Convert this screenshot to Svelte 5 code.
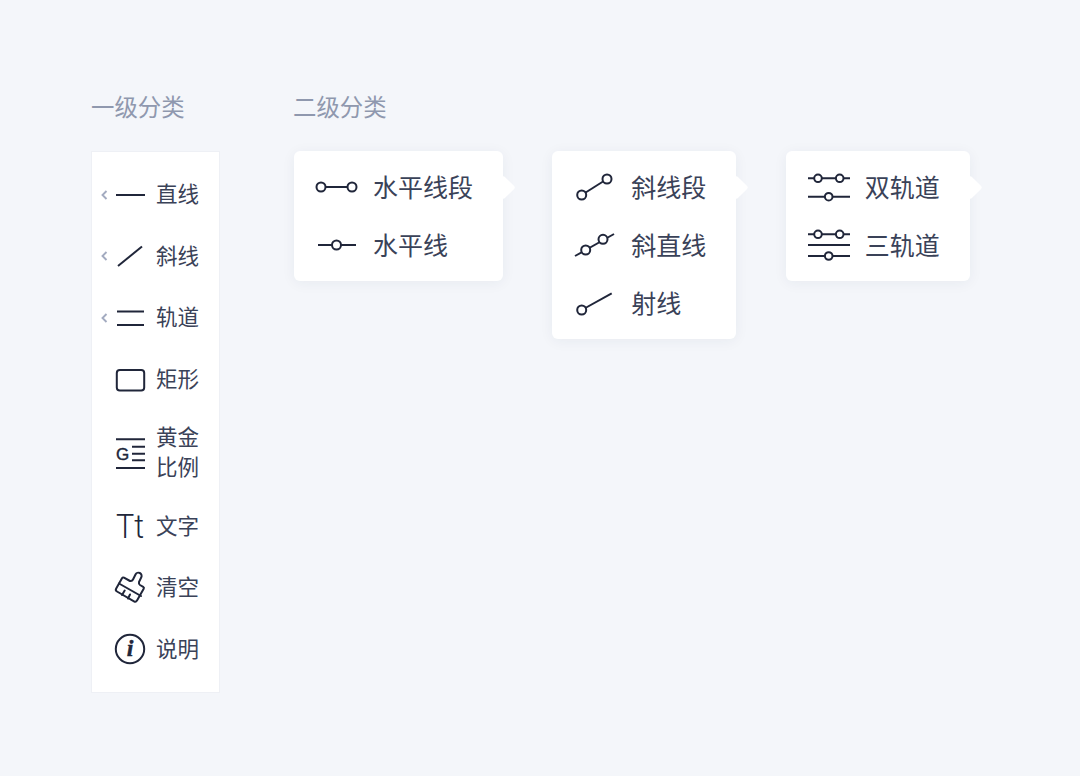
<script>
	const primary = [
		{ label: '直线', icon: 'line', more: true },
		{ label: '斜线', icon: 'slant', more: true },
		{ label: '轨道', icon: 'track', more: true },
		{ label: '矩形', icon: 'rect' },
		{ label: '黄金比例', icon: 'golden', tall: true },
		{ label: '文字', icon: 'text' },
		{ label: '清空', icon: 'brush' },
		{ label: '说明', icon: 'info' }
	];

	const groups = [
		[
			{ label: '水平线段', icon: 'h-segment' },
			{ label: '水平线', icon: 'h-line' }
		],
		[
			{ label: '斜线段', icon: 's-segment' },
			{ label: '斜直线', icon: 's-line' },
			{ label: '射线', icon: 'ray' }
		],
		[
			{ label: '双轨道', icon: 'double' },
			{ label: '三轨道', icon: 'triple' }
		]
	];
</script>

{#snippet mainIcon(name)}
	<svg class="main-icon" viewBox="0 0 30 34" fill="none" stroke="currentColor" stroke-width="2">
		{#if name === 'line'}
			<path d="M1 17h29" />
		{:else if name === 'slant'}
			<path d="M3 27 27 7.500" />
		{:else if name === 'track'}
			<path d="M2 10.500h27M2 24h27" />
		{:else if name === 'rect'}
			<rect x="1.800" y="7" width="27.400" height="20.500" rx="3" />
		{:else if name === 'golden'}
			<path d="M1 3.300h29M1 32h29M17 10.700h13M17 17.700h13M17 24.300h13" />
			<text class="g" x="1" y="23.500" stroke="currentColor" stroke-width="0.400" fill="currentColor">G</text>
		{:else if name === 'text'}
			<text class="tt" x="1" y="29" stroke="none" fill="currentColor" textLength="28" lengthAdjust="spacingAndGlyphs">Tt</text>
		{:else if name === 'brush'}
			<path d="M1.200 17.500 7 7.200a1.500 1.500 0 0 1 2-.5L15 10Q17 10.500 18 8.500L20.500 3.500a3.200 3.200 0 0 1 5.800 2.800L24 11Q23.500 13 25 14L28.200 15.800a1.500 1.500 0 0 1 .5 2L22 29.500a2.200 2.200 0 0 1-3 .8L2 20.500a2.200 2.200 0 0 1-.8-3Z" stroke-linejoin="round" />
			<path d="M4 12.500 26 25M7 24 9.700 19.500M13 27.500 15 23.500" stroke-linecap="round" />
		{:else if name === 'info'}
			<circle cx="15" cy="17" r="14.200" />
			<text class="i" x="15" y="24" text-anchor="middle" stroke="currentColor" stroke-width="0.400" fill="currentColor">i</text>
		{/if}
	</svg>
{/snippet}

{#snippet subIcon(name)}
	<svg class="sub-icon" viewBox="0 0 44 32" fill="none" stroke="currentColor" stroke-width="2">
		{#if name === 'h-segment'}
			<path d="M10 15h24" />
			<circle cx="6" cy="15" r="4.500" fill="#fff" />
			<circle cx="37" cy="15" r="4.500" fill="#fff" />
		{:else if name === 'h-line'}
			<path d="M3 15h38" />
			<circle cx="21.500" cy="15" r="4.500" fill="#fff" />
		{:else if name === 's-segment'}
			<path d="M8.700 23 34 7" />
			<circle cx="8.700" cy="23" r="4.500" fill="#fff" />
			<circle cx="34" cy="7" r="4.500" fill="#fff" />
		{:else if name === 's-line'}
			<path d="M2 26 41 4" />
			<circle cx="12.700" cy="20" r="4.500" fill="#fff" />
			<circle cx="30" cy="9.300" r="4.500" fill="#fff" />
		{:else if name === 'ray'}
			<path d="M8.700 22 38.700 5.300" />
			<circle cx="8.700" cy="22" r="4.500" fill="#fff" />
		{:else if name === 'double'}
			<path d="M1 6.300h42M1 24.700h42" />
			<circle cx="11" cy="6.300" r="3.800" fill="#fff" />
			<circle cx="32.700" cy="6.300" r="3.800" fill="#fff" />
			<circle cx="21.700" cy="24.700" r="3.800" fill="#fff" />
		{:else if name === 'triple'}
			<path d="M1 4.300h42M1 15h42M1 26h42" />
			<circle cx="11" cy="4.300" r="3.800" fill="#fff" />
			<circle cx="32.700" cy="4.300" r="3.800" fill="#fff" />
			<circle cx="21.700" cy="26" r="3.800" fill="#fff" />
		{/if}
	</svg>
{/snippet}

<main class="page">
	<section class="first">
		<h2>一级分类</h2>
		<ul class="sidebar">
			{#each primary as item}
				<li class="side-row" class:tall={item.tall}>
					<span class="chevron-slot">
						{#if item.more}
							<svg class="chevron" viewBox="0 0 7 10" fill="none">
								<path d="M5.500 1 1.500 5l4 4" stroke="currentColor" stroke-width="1.900" />
							</svg>
						{/if}
					</span>
					{@render mainIcon(item.icon)}
					<span class="side-label">{item.label}</span>
				</li>
			{/each}
		</ul>
	</section>

	<section class="second">
		<h2>二级分类</h2>
		<div class="flyouts">
			{#each groups as group}
				<ul class="flyout">
					{#each group as item}
						<li class="fly-row">
							{@render subIcon(item.icon)}
							<span class="fly-label">{item.label}</span>
						</li>
					{/each}
				</ul>
			{/each}
		</div>
	</section>
</main>

<style>
	:global(body) {
		background: #f4f6fa;
	}

	ul {
		list-style: none;
		margin: 0;
		padding: 0;
	}

	.page {
		display: flex;
		align-items: flex-start;
		gap: 74px;
		box-sizing: border-box;
		min-height: 776px;
		padding: 91px 0 0 91px;
		font-family: 'Noto Sans CJK SC', 'Noto Sans', sans-serif;
		color: #3a4258;
	}

	h2 {
		margin: 0 0 30px;
		color: #8f98ae;
		font-weight: 400;
		font-size: 23.400px;
		line-height: 30px;
	}

	.second h2 {
		margin-left: -1px;
	}

	.sidebar {
		box-sizing: border-box;
		width: 129px;
		padding: 12px 0;
		border: 1px solid #eef0f5;
		background: #fff;
	}

	.side-row {
		display: flex;
		align-items: center;
		box-sizing: border-box;
		height: 61.600px;
		padding-left: 9px;
		color: #20263a;
	}

	.side-row.tall {
		height: 85px;
	}

	.chevron-slot {
		flex: none;
		width: 14px;
	}

	.chevron {
		display: block;
		width: 7px;
		height: 10px;
		color: #a3abc0;
	}

	.main-icon {
		flex: none;
		width: 30px;
		height: 34px;
		overflow: visible;
	}

	.g {
		font-family: 'Liberation Sans', sans-serif;
		font-size: 17px;
	}

	.tt {
		font-family: Roboto, sans-serif;
		font-size: 34px;
		font-weight: 300;
	}

	.i {
		font-family: 'Liberation Serif', serif;
		font-size: 24px;
		font-style: italic;
		font-weight: 700;
	}

	.side-label {
		width: 44px;
		margin: 0 0 3px 11px;
		color: #3a4258;
		font-size: 21.500px;
		line-height: 30px;
	}

	.flyouts {
		display: flex;
		align-items: flex-start;
		gap: 49.300px;
	}

	.flyout {
		position: relative;
		padding: 8px 30px 6px 21px;
		border-radius: 6px;
		background: #fff;
		box-shadow: 0 2px 14px rgba(40, 50, 90, 0.06);
	}

	.flyout::after {
		content: '';
		position: absolute;
		top: 27.500px;
		right: -9px;
		width: 17px;
		height: 17px;
		border-radius: 2px;
		background: #fff;
		transform: rotate(45deg);
	}

	.fly-row {
		display: flex;
		align-items: center;
		gap: 14px;
		height: 58px;
		font-size: 25px;
		white-space: nowrap;
	}

	.fly-label {
		margin-bottom: 4px;
	}

	.sub-icon {
		flex: none;
		width: 44px;
		height: 32px;
		color: #20263a;
		overflow: visible;
	}
</style>
